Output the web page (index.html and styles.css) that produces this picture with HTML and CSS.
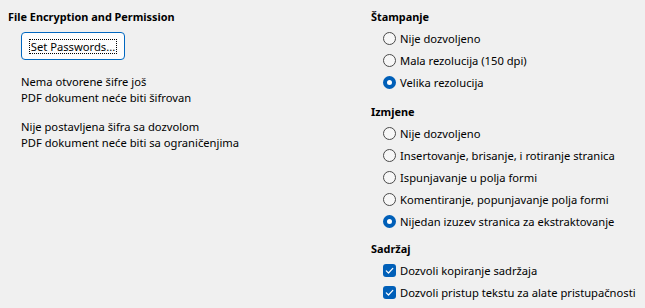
FILE: index.html
```html
<!DOCTYPE html>
<html lang="sr">
<head>
<meta charset="utf-8">
<title>File Encryption and Permission</title>
<link rel="stylesheet" href="styles.css">
</head>
<body>
<div class="dialog">
  <section class="left">
    <h2 class="heading">File Encryption and Permission</h2>
    <button class="btn" type="button"><span class="focus">Set Passwords...</span></button>
    <p class="info first">Nema otvorene šifre još<br>PDF dokument neće biti šifrovan</p>
    <p class="info second">Nije postavljena šifra sa dozvolom<br>PDF dokument neće biti sa ograničenjima</p>
  </section>
  <section class="right">
    <div class="group g1">
      <h2 class="heading">Štampanje</h2>
      <div class="opt"><span class="radio"></span><span>Nije dozvoljeno</span></div>
      <div class="opt"><span class="radio"></span><span>Mala rezolucija (150 dpi)</span></div>
      <div class="opt"><span class="radio on"></span><span>Velika rezolucija</span></div>
    </div>
    <div class="group g2">
      <h2 class="heading">Izmjene</h2>
      <div class="opt"><span class="radio"></span><span>Nije dozvoljeno</span></div>
      <div class="opt"><span class="radio"></span><span>Insertovanje, brisanje, i rotiranje stranica</span></div>
      <div class="opt"><span class="radio"></span><span>Ispunjavanje u polja formi</span></div>
      <div class="opt"><span class="radio"></span><span>Komentiranje, popunjavanje polja formi</span></div>
      <div class="opt"><span class="radio on"></span><span>Nijedan izuzev stranica za ekstraktovanje</span></div>
    </div>
    <div class="group g3">
      <h2 class="heading">Sadržaj</h2>
      <div class="opt"><span class="check"><svg viewBox="0 0 13 13" width="13" height="13"><path d="M3.3 6.8 L5.5 9 L9.8 4.4" fill="none" stroke="#fff" stroke-width="1.2" stroke-linecap="round" stroke-linejoin="round"/></svg></span><span>Dozvoli kopiranje sadržaja</span></div>
      <div class="opt"><span class="check"><svg viewBox="0 0 13 13" width="13" height="13"><path d="M3.3 6.8 L5.5 9 L9.8 4.4" fill="none" stroke="#fff" stroke-width="1.2" stroke-linecap="round" stroke-linejoin="round"/></svg></span><span>Dozvoli pristup tekstu za alate pristupačnosti</span></div>
    </div>
  </section>
</div>
</body>
</html>
```

FILE: styles.css
```css
html, body {
  margin: 0;
  padding: 0;
  background: #f0f0f0;
}
body {
  font-family: "Noto Sans", "Open Sans", sans-serif;
  font-size: 11.2px;
  color: #000;
}
.dialog {
  display: flex;
  padding: 8px 0 0 8px;
}
.left {
  width: 363px;
  display: flex;
  flex-direction: column;
  align-items: flex-start;
}
.right {
  flex: 1;
}
.heading {
  margin: 0 0 1px 0;
  font-size: 10.9px;
  font-weight: bold;
  line-height: 18px;
}
.btn {
  margin: 5px 0 0 13px;
  width: 104px;
  height: 28px;
  box-sizing: border-box;
  border: 1px solid #0067c0;
  border-radius: 4px;
  background: #fdfdfd;
  font: inherit;
  color: #000;
  padding: 0;
  display: flex;
  align-items: center;
  justify-content: center;
}
.focus {
  border: 1px dotted #000;
  line-height: 13px;
  padding: 0 1px;
}
.info {
  margin: 0 0 0 13px;
  line-height: 16px;
}
.info.first { margin-top: 14px; }
.info.second { margin-top: 13px; }
.g2 { margin-top: 10px; }
.g3 { margin-top: 8px; }
.opt {
  display: flex;
  align-items: center;
  height: 22px;
  padding-left: 12px;
  gap: 4px;
  white-space: nowrap;
}
.radio {
  width: 13px;
  height: 13px;
  box-sizing: border-box;
  border: 1px solid #4a4a4a;
  border-radius: 50%;
  background: #f7f7f7;
  flex: none;
}
.radio.on {
  border: 4px solid #005fb8;
  background: #fff;
}
.check {
  width: 13px;
  height: 13px;
  border-radius: 3px;
  background: #005fb8;
  flex: none;
  display: flex;
}
.check svg { display: block; }
```
